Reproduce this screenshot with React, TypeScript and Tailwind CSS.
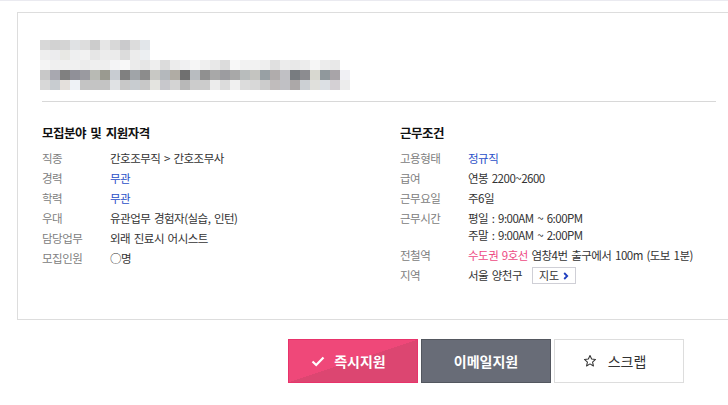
import React from "react";

const R1 = ["d8d8d8","d2d2d2","d4d4d4","e0e2e4","dddddd","cccccc","e6e6e6","d8d8d8","cacacc","dcdcdc","e2e6ea"];
const R2 = ["eeeeee","ececee","e8e8e4","eeeff0","f2f2f2","e6e6e6","ececec","ebebeb","dcdcdc","ececec","eceff2"];
const R3 = ["f4f4f4","efefef","f0f0f0","f0f0f0","ececec","efefef","eeeeee","f4f4f6","f8f8f8","ebebeb","e6e6e6","eeeeee","dcdcdc","ececec","f0f0f2","f6f6f6","efefef","e8e8e8","dcdcdc","f8f8f8","f2f2f2","f2f2f2","eeeeee","e0e0e0","ececec","e8e8e8","ececec","f6f6f6","ececec","e8e8e8"];
const R4 = ["c8c8c8","a8a8b0","808080","909098","9a9aa0","b8bab4","9a9a90","c8ccd2","808080","a0a4a8","8c8c8c","c8c8c4","b4b8bc","b0aca4","707070","b8bcc0","909090","a8a8a8","9c9ca0","a8a8a8","b8bcbc","c4c4c0","98a0a4","b0acac","c0c0c4","787c80","8c8c90","d8d8d0","90989c","a8a4a8","f0f0f4"];
const R5 = ["d8d8d8","c8ccd0","e4e0dc","eef2f6","c4c4c4","c4c4c4","c4c4c4","e0e2e4","c8c8c8","c8ccd0","c8c8c8","e4e4e0","c8c8cc","d4d4d4","b8b8b8","cccccc","cccccc","ececec","dcdcdc","f0f0f0","dcdcdc","d8d8d8","cccccc","c0bcbc","c0c0c4","aca8a8","ccd0d4","e0e0dc","dce0e4","d4d0d4","ececec"];

function Mosaic() {
  const rows = [R1, R2, R3, R4, R5];
  return (
    <svg width="312" height="50" viewBox="0 0 312 50" className="block ml-[-2px]">
      {rows.map((row, ri) =>
        row.map((c, ci) => (
          <rect key={`${ri}-${ci}`} x={ci * 10} y={ri * 10} width="10" height="10" fill={`#${c}`} />
        ))
      )}
    </svg>
  );
}

function Row({ label, children }: { label: string; children: React.ReactNode }) {
  return (
    <div className="flex pb-[3px] leading-[17px] text-[11.5px] tracking-[-0.5px] [word-spacing:1.5px]">
      <div className="w-[68px] shrink-0 text-[#808080]">{label}</div>
      <div className="text-[#333]">{children}</div>
    </div>
  );
}

export default function App() {
  return (
    <div
      className="w-[728px] h-[405px] overflow-hidden bg-white relative"
      style={{ fontFamily: '"Noto Sans CJK KR", "Noto Sans", sans-serif' }}
    >
      <div className="h-px bg-[#eaeaf0]" />
      <div className="mt-[11px] ml-[17px] w-[724px] border border-[#dddddd] pl-[24px] pr-[24px] pt-[27px] pb-[32px]">
        <Mosaic />
        <div className="mt-[11px] h-px bg-[#d8d8d8]" />
        <div className="flex mt-[22px]">
          <div className="w-[358px]">
            <div className="h-[18px] leading-[18px] text-[12.5px] font-bold text-[#111] mb-[8px] tracking-[-0.5px] [word-spacing:2px]">모집분야 및 지원자격</div>
            <Row label="직종">간호조무직 &gt; 간호조무사</Row>
            <Row label="경력"><span className="text-[#2a4fc8]">무관</span></Row>
            <Row label="학력"><span className="text-[#2a4fc8]">무관</span></Row>
            <Row label="우대">유관업무 경험자(실습, 인턴)</Row>
            <Row label="담당업무">외래 진료시 어시스트</Row>
            <Row label="모집인원">○명</Row>
          </div>
          <div className="flex-1">
            <div className="h-[18px] leading-[18px] text-[12.5px] font-bold text-[#111] mb-[8px] tracking-[-0.5px]">근무조건</div>
            <Row label="고용형태"><span className="text-[#2a4fc8]">정규직</span></Row>
            <Row label="급여">연봉 2200~2600</Row>
            <Row label="근무요일">주6일</Row>
            <Row label="근무시간">
              <div>평일 : 9:00AM ~ 6:00PM</div>
              <div>주말 : 9:00AM ~ 2:00PM</div>
            </Row>
            <Row label="전철역">
              <span className="text-[#ee4a84]">수도권 9호선</span> 염창4번 출구에서 100m (도보 1분)
            </Row>
            <Row label="지역">
              <span className="flex items-center">
                서울 양천구
                <span className="ml-[10px] h-[17px] px-[6px] border border-[#cfcfd6] flex items-center text-[11px] text-[#333] leading-none tracking-normal">
                  지도
                  <svg width="6" height="8" viewBox="0 0 6 8" className="ml-[4px]">
                    <path d="M1.2 1 L4.2 4 L1.2 7" stroke="#1f3fbf" strokeWidth="1.8" fill="none" />
                  </svg>
                </span>
              </span>
            </Row>
          </div>
        </div>
      </div>
      <div className="mt-[19px] ml-[288px] flex gap-[3px]">
        <button className="w-[130px] h-[44px] border border-[#e8336b] bg-[linear-gradient(to_top_left,#dc4671_50%,#ef4879_50%)] flex items-center justify-center pr-[9px] text-white font-bold text-[14px]">
          <svg width="14" height="11" viewBox="0 0 14 11" className="mr-[9px]">
            <path d="M1.5 5.5 L5.2 9 L12.5 1.5" stroke="white" strokeWidth="2.2" fill="none" />
          </svg>
          즉시지원
        </button>
        <button className="w-[130px] h-[44px] border border-[#53575f] bg-[#686c77] flex items-center justify-center text-white font-bold text-[14px]">
          이메일지원
        </button>
        <button className="w-[130px] h-[44px] border border-[#dddddd] bg-white flex items-center justify-center pr-[9px] text-[#333] text-[14px]">
          <svg width="14" height="14" viewBox="0 0 24 24" className="mr-[11px]">
            <path d="M12 2.5 L14.8 8.7 L21.5 9.3 L16.4 13.8 L17.9 20.5 L12 17 L6.1 20.5 L7.6 13.8 L2.5 9.3 L9.2 8.7 Z" stroke="#333" strokeWidth="1.8" fill="none" strokeLinejoin="round" />
          </svg>
          스크랩
        </button>
      </div>
    </div>
  );
}
